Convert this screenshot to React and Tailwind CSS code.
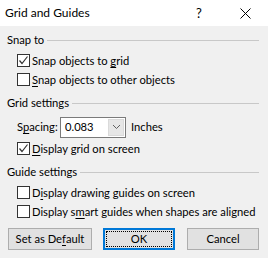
import React from 'react';

const FONT = { fontFamily: 'Lato, "Segoe UI", Arial, sans-serif' };

const U = ({ children }) => <span className="underline underline-offset-[2px] decoration-[1px]">{children}</span>;

const Header = ({ children }) => (
    <div className="flex items-center h-4 pl-[7px] pr-[9px]">
        <span className="pr-[3px] whitespace-nowrap">{children}</span>
        <div className="flex-1 h-px bg-[#c8c8c8]" />
    </div>
);

const Check = ({ checked, children, className = '' }) => (
    <div className={`flex items-center h-[19px] pl-[17px] gap-[2px] whitespace-nowrap ${className}`}>
        <div className="w-[13px] h-[13px] shrink-0 border border-[#333333] bg-white flex items-center justify-center">
            {checked && (
                <svg width="11" height="11" viewBox="0 0 11 11">
                    <polyline points="1.5,5.5 4,8.5 9.5,1.5" fill="none" stroke="#333333" strokeWidth="1.2" />
                </svg>
            )}
        </div>
        <span>{children}</span>
    </div>
);

const Button = ({ children, className = '' }) => (
    <div className={`h-[22px] border border-[#adadad] bg-[#e1e1e1] flex items-center justify-center whitespace-nowrap ${className}`}>
        {children}
    </div>
);

export default function App() {
    return (
        <div className="w-[268px] h-[258px] bg-[#f0f0f0] text-[11px] text-black leading-none overflow-hidden" style={FONT}>
            {/* Title bar */}
            <div className="h-[26px] bg-white flex items-center text-[12px]">
                <span className="pl-[5px] flex-1">Grid and Guides</span>
                <div className="w-[46px] h-full flex items-center justify-center text-[13px]">?</div>
                <div className="w-[46px] h-full flex items-center justify-center">
                    <svg width="11" height="11" viewBox="0 0 11 11">
                        <path d="M0.5 0.5 L10.5 10.5 M10.5 0.5 L0.5 10.5" stroke="#000" strokeWidth="1" />
                    </svg>
                </div>
            </div>

            <div className="pt-[6px] flex flex-col text-[11.2px]">
                <Header>Snap to</Header>
                <Check checked className="mt-[3px]">Snap objects to <U>g</U>rid</Check>
                <Check><U>S</U>nap objects to other objects</Check>

                <div className="mt-[6px]"><Header>Grid settings</Header></div>
                <div className="mt-[5px] h-[22px] flex items-center pl-[17px] whitespace-nowrap">
                    <span className="w-[43px] shrink-0">S<U>p</U>acing:</span>
                    <div className="w-[66px] h-[21px] shrink-0 border border-[#7a7a7a] bg-white flex items-center">
                        <span className="flex-1 pl-[4px]">0.083</span>
                        <div className="w-[16px] h-[17px] mr-px bg-[#e6e6e6] border border-[#dadada] flex items-center justify-center">
                            <svg width="9" height="6" viewBox="0 0 9 6">
                                <polyline points="1,1 4.5,4.5 8,1" fill="none" stroke="#606060" strokeWidth="1" />
                            </svg>
                        </div>
                    </div>
                    <span className="pl-[5px]">Inches</span>
                </div>
                <Check checked className="mt-px"><U>D</U>isplay grid on screen</Check>

                <div className="mt-[6px]"><Header>Guide settings</Header></div>
                <Check className="mt-[3px]">D<U>i</U>splay drawing guides on screen</Check>
                <Check>Display s<U>m</U>art guides when shapes are aligned</Check>

                <div className="mt-[7px] flex pl-[8px]">
                    <Button className="w-[84px]">Set as De<U>f</U>ault</Button>
                    <div className="ml-[11px] w-[72px] h-[22px] border-2 border-[#0078d7] bg-[#e1e1e1] p-px">
                        <div className="w-full h-full border border-dotted border-black flex items-center justify-center">OK</div>
                    </div>
                    <Button className="ml-[12px] w-[72px]">Cancel</Button>
                </div>
            </div>
        </div>
    );
}
